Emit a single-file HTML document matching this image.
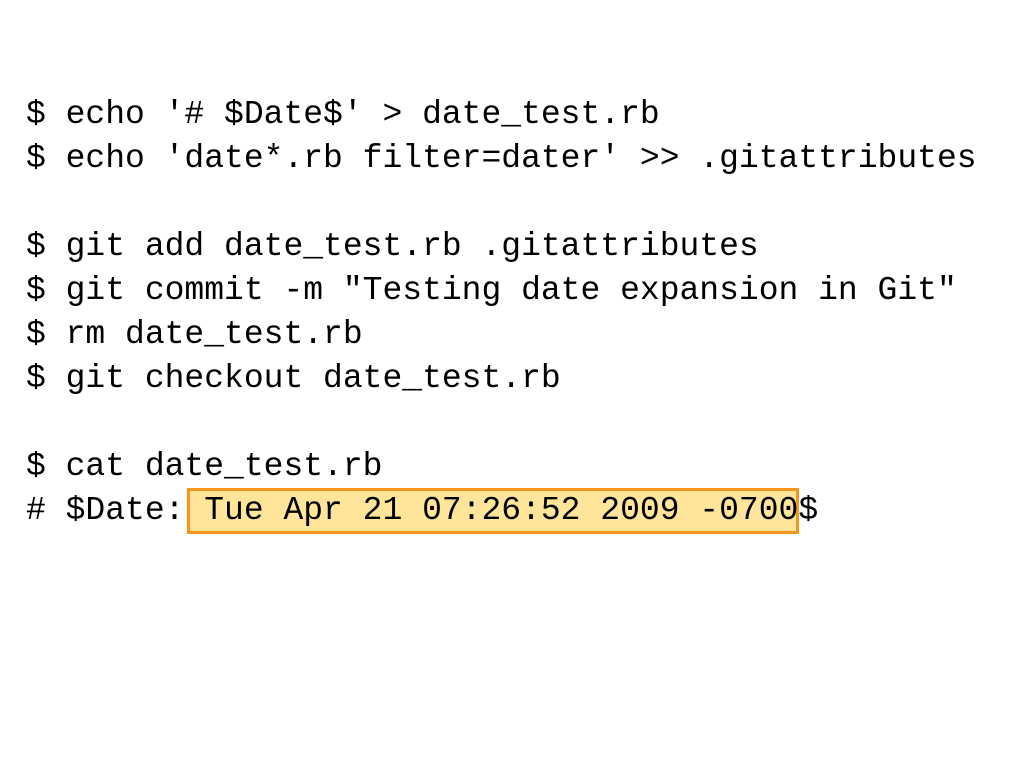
<!DOCTYPE html>
<html><head><meta charset="utf-8"><style>
html,body{margin:0;padding:0;background:#fff;width:1024px;height:768px;overflow:hidden}
pre{position:absolute;left:26px;top:93px;margin:0;font-family:"Liberation Mono","DejaVu Sans Mono",monospace;font-size:33px;line-height:44px;color:#000;z-index:2}
.hl{position:absolute;left:187px;top:488px;width:606px;height:40px;background:#fee59a;border:3px solid #f7961e;z-index:1}
</style></head><body>
<div class="hl"></div>
<pre>$ echo '# $Date$' &gt; date_test.rb
$ echo 'date*.rb filter=dater' &gt;&gt; .gitattributes

$ git add date_test.rb .gitattributes
$ git commit -m "Testing date expansion in Git"
$ rm date_test.rb
$ git checkout date_test.rb

$ cat date_test.rb
# $Date: Tue Apr 21 07:26:52 2009 -0700$</pre>
</body></html>
